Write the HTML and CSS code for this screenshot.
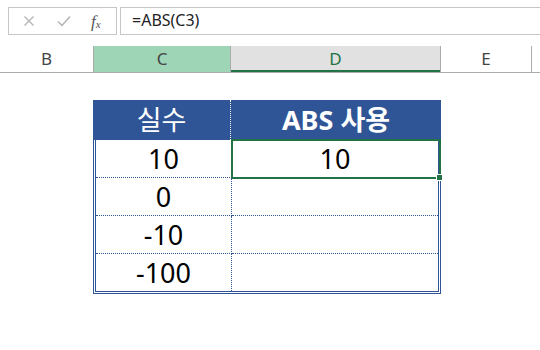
FILE: index.html
```html
<!DOCTYPE html>
<html lang="ko">
<head>
<meta charset="UTF-8">
<title>ABS 함수</title>
<link rel="stylesheet" href="styles.css">
</head>
<body>

<!-- barra de fórmulas -->
<div class="formula-bar">
    <div class="name-box">
        <svg class="icon icon-cancel" width="12" height="12" viewBox="0 0 12 12">
            <path d="M1.5 1.5 L10.5 10.5 M10.5 1.5 L1.5 10.5" stroke="#b3b3b3" stroke-width="1.3" fill="none"/>
        </svg>
        <svg class="icon icon-ok" width="14" height="12" viewBox="0 0 14 12">
            <path d="M1 6.5 L5 10.5 L13 1.5" stroke="#b3b3b3" stroke-width="1.5" fill="none"/>
        </svg>
        <span class="fx">f<sub>x</sub></span>
    </div>
    <div class="formula">=ABS(C3)</div>
</div>

<!-- cabeçalho das colunas -->
<div class="col-headers">
    <div class="col-head col-b">B</div>
    <div class="col-head col-c">C</div>
    <div class="col-head col-d">D</div>
    <div class="col-head col-e">E</div>
    <div class="col-head col-f"></div>
</div>

<!-- tabela -->
<div class="sheet">
    <div class="data-table">
        <div class="table-head">
            <div class="th th-first">실수</div>
            <div class="th th-bold">ABS 사용</div>
        </div>
        <div class="table-body">
            <div class="td td-first">10</div>
            <div class="td selected">10</div>
            <div class="td td-first">0</div>
            <div class="td"></div>
            <div class="td td-first">-10</div>
            <div class="td"></div>
            <div class="td td-first last">-100</div>
            <div class="td last"></div>
        </div>
    </div>
</div>

</body>
</html>
```

FILE: styles.css
```css
body {
    margin: 0;
    padding: 0;
    width: 540px;
    height: 350px;
    background-color: #fff;
    font-family: "Noto Sans", "Noto Sans CJK KR", sans-serif;
    overflow: hidden;
}

.formula-bar {
    display: flex;
    gap: 3px;
    padding: 7px 0 0 8px;
}

.name-box {
    width: 109px;
    height: 28px;
    box-sizing: border-box;
    border: 1px solid #c6c6c6;
    display: flex;
    align-items: center;
    padding-left: 14px;
}

.icon-ok {
    margin-left: 22px;
}

.fx {
    margin-left: 20px;
    font-family: "Liberation Serif", serif;
    font-style: italic;
    font-size: 17px;
    color: #555;
    line-height: 1;
}

.fx sub {
    font-size: 11px;
    vertical-align: -1px;
}

.formula {
    flex: 1;
    height: 28px;
    box-sizing: border-box;
    border: 1px solid #c6c6c6;
    border-right: none;
    padding-left: 11px;
    font-size: 16px;
    line-height: 25px;
    color: #222;
}

.col-headers {
    display: flex;
    margin-top: 11px;
    height: 27px;
    box-sizing: border-box;
    border-bottom: 1px solid #ababab;
}

.col-head {
    box-sizing: border-box;
    border-right: 1px solid #ababab;
    text-align: center;
    font-size: 17px;
    line-height: 26px;
    color: #444;
}

.col-b { width: 94px; }

.col-c {
    width: 137px;
    background-color: #9fd5b7;
}

.col-d {
    width: 210px;
    background-color: #e1e1e1;
    box-shadow: inset 0 -2px 0 #217346;
    color: #217346;
}

.col-e { width: 91px; }

.col-f {
    flex: 1;
    border-right: none;
}

.sheet {
    padding: 27px 0 0 93px;
}

.data-table {
    width: 348px;
}

.table-head {
    display: grid;
    grid-template-columns: 138px 1fr;
    height: 40px;
    background-color: #2f5597;
    color: #fff;
    font-size: 27px;
}

.th {
    text-align: center;
    line-height: 40px;
}

.th-first {
    border-right: 1px dotted #fff;
}

.th-bold {
    font-weight: bold;
}

.table-body {
    display: grid;
    grid-template-columns: 136px 1fr;
    border: 3px double #2f5597;
    border-top: none;
}

.td {
    position: relative;
    height: 38px;
    box-sizing: border-box;
    border-bottom: 1px dotted #2f5597;
    text-align: center;
    font-size: 27px;
    line-height: 37px;
    color: #000;
}

.td.last {
    border-bottom: none;
    height: 37px;
}

.td-first {
    border-right: 1px dotted #2f5597;
}

.selected::after {
    content: "";
    position: absolute;
    left: -1px;
    top: -1px;
    right: -3px;
    bottom: -2px;
    border: 2px solid #217346;
}

.selected::before {
    content: "";
    position: absolute;
    right: -5px;
    bottom: -4px;
    width: 5px;
    height: 5px;
    background-color: #217346;
    border: 1px solid #fff;
    z-index: 1;
}
```
